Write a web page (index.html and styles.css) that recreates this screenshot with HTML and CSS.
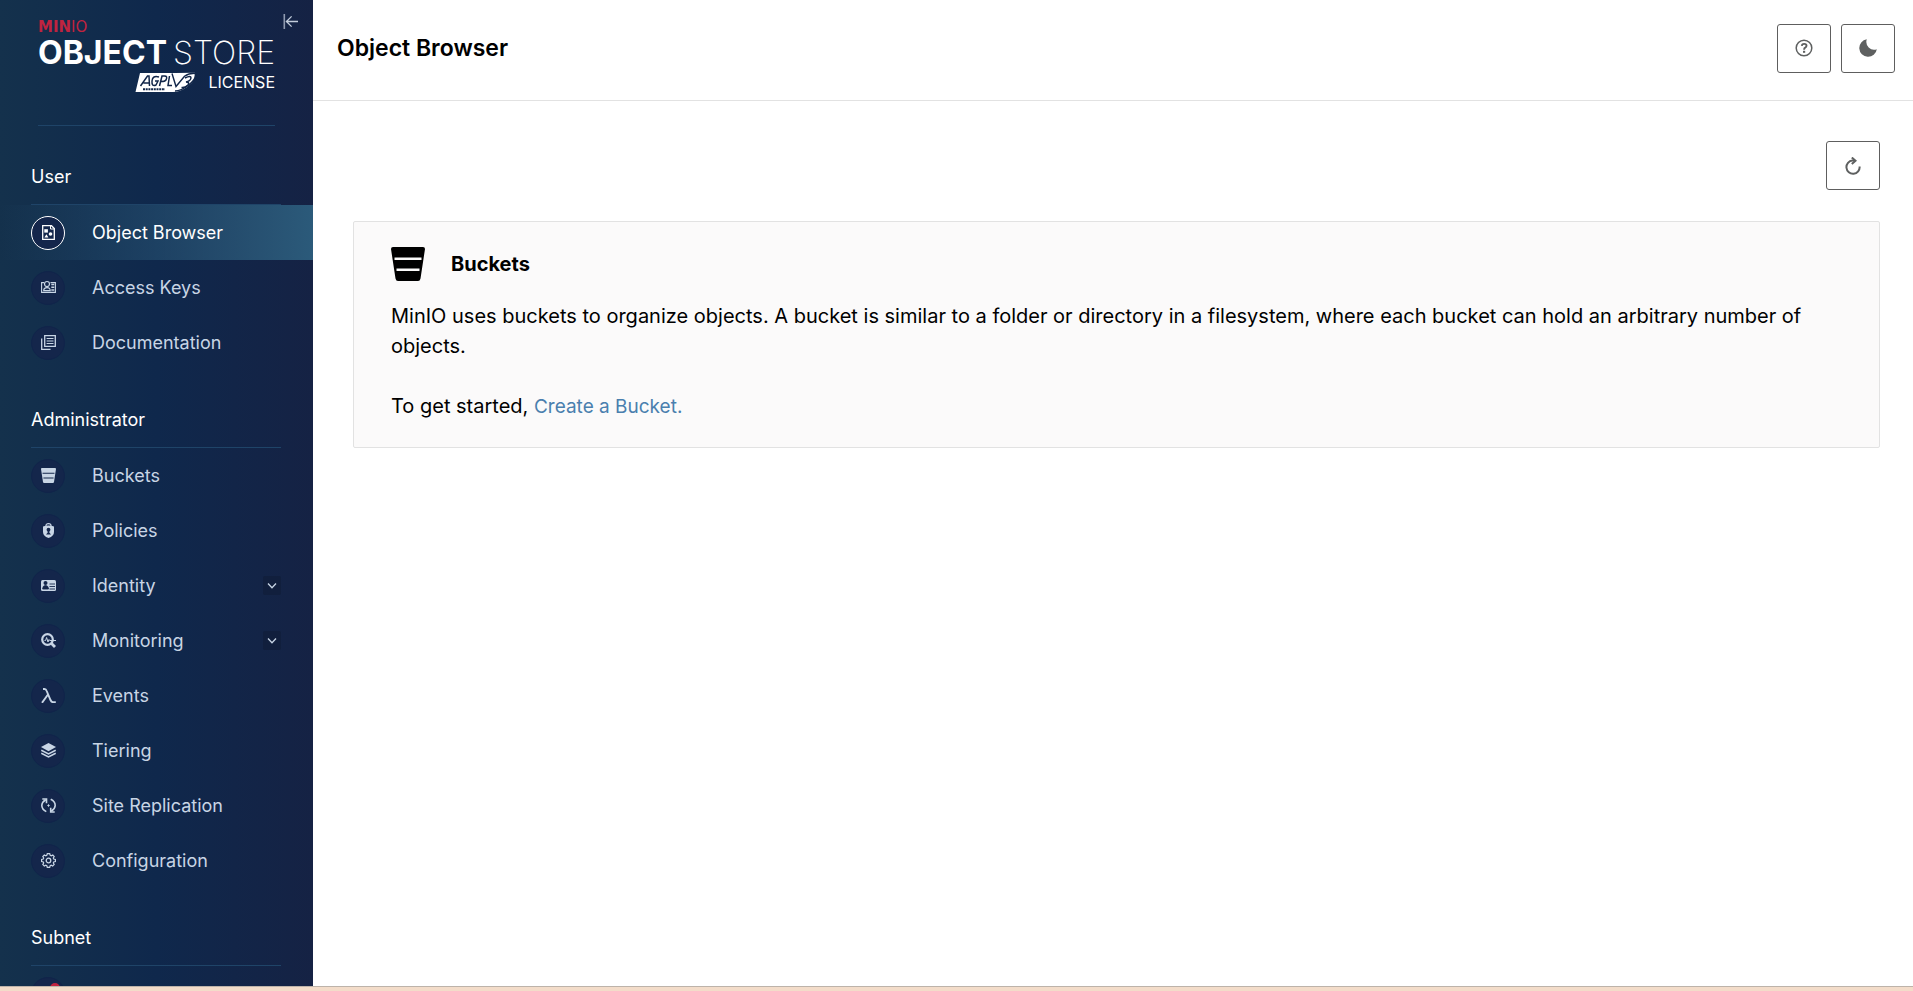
FILE: index.html
```html
<!DOCTYPE html>
<html lang="en">
<head>
<meta charset="utf-8">
<title>Object Browser</title>
<link rel="stylesheet" href="styles.css">
</head>
<body>
<div class="app">
  <aside class="sidebar">
    <div class="brand">
      <button class="collapse" type="button" aria-label="Collapse menu">
        <svg width="16" height="16" viewBox="0 0 16 16"><rect x="0.5" y="0" width="1.6" height="15" fill="#8f9ab0"/><path d="M15 7.5H3.6M8.6 2.4L3.4 7.5l5.2 5.1" fill="none" stroke="#c3cddc" stroke-width="1.3"/></svg>
      </button>
      <div class="brand-top"><b>MIN</b><span>IO</span></div>
      <div class="brand-name"><b>OBJECT</b> <span>STORE</span></div>
      <div class="brand-license">
        <svg class="agpl" width="62" height="21" viewBox="0 0 62 21">
          <path d="M5 1H40L60 .8Q62 8 52 15Q45 20 38 20H.5Z" fill="#fff"/>
          <path d="M37 1.5L41 14.5L49.5 4.2Q54 1 60 1.2Q62 7 53 13.500Q46 19 40 19" fill="none" stroke="#112649" stroke-width="1.4"/>
          <path d="M5.500 14L12.500 4H14L14.500 14M8.500 11H14M24 5Q17.500 3 17 9T21 13L23 9H20M24.500 14L27 4H29.500Q33 4 31 8Q30 9.500 26 9.500M34.500 4L33 13.500H37M50 6Q56 3 56 6Q55.500 9 51 10Q55 10 53 13Q50 16 46.500 15.500" fill="none" stroke="#112649" stroke-width="1.5"/>
          <path d="M8 17.300H30" stroke="#112649" stroke-width="2" stroke-dasharray="2 .7"/>
        </svg>
        <span>LICENSE</span>
      </div>
    </div>
    <nav class="menu">
      <h2 class="group">User</h2>
      <a class="item active" href="#browser"><span class="dot"><svg width="15" height="15" viewBox="0 0 15 15"><path d="M1.700.7H10.500L13.300 3.500V14.300H1.700Z" fill="none" stroke="currentColor" stroke-width="1.300"/><path d="M9.500.5V4H13.500" fill="none" stroke="currentColor"/><rect x="3.300" y="4.200" width="3.600" height="3.400" fill="currentColor"/><circle cx="9.500" cy="9" r="1.800" fill="currentColor"/><path d="M5.400 9.300L7.400 12.600H3.400Z" fill="currentColor"/></svg></span>Object Browser</a>
      <a class="item" href="#keys"><span class="dot"><svg width="15" height="15" viewBox="0 0 15 15"><path d="M3 2.600H.6V12.400H14.400V2.600H9.500" fill="none" stroke="currentColor" stroke-width="1.100"/><circle cx="6" cy="4" r="2.500" fill="none" stroke="currentColor" stroke-width="1.200"/><path d="M2.700 10.700Q2.700 7.600 6 7.600T9.200 10.700Z" fill="none" stroke="currentColor" stroke-width="1.200"/><path d="M10.300 4.500H13.300M10.300 7.200H13.300M10.300 10H13.300" stroke="currentColor" stroke-width="1.500"/></svg></span>Access Keys</a>
      <a class="item" href="#docs"><span class="dot"><svg width="15" height="15" viewBox="0 0 15 15"><path d="M3.700.7H14.300V11.300H3.700ZM.7 3.500V14.300H9.500" fill="none" stroke="currentColor" stroke-width="1.300"/><path d="M5.600 3.500H12.500M5.600 6H12.500M5.600 8.500H12.500" stroke="currentColor" stroke-width="1.200"/></svg></span>Documentation</a>

      <h2 class="group">Administrator</h2>
      <a class="item" href="#buckets"><span class="dot"><svg width="15" height="15" viewBox="0 0 34 34"><path d="M2 0H32Q34 0 34 2L29.500 31.500Q29 34 27 34H7Q5 34 4.500 31.500L0 2Q0 0 2 0ZM3.500 10.500V13H30.500V10.500ZM5.500 21.500V24H28.500V21.500Z" fill="currentColor" fill-rule="evenodd"/></svg></span>Buckets</a>
      <a class="item" href="#policies"><span class="dot"><svg width="15" height="15" viewBox="0 0 15 15"><path d="M5 3V2.600Q5 .6 7.500.6T10 2.600V3" fill="none" stroke="currentColor" stroke-width="1.200"/><path d="M2 3.500Q7.500 1.500 13 3.500V9Q13 13 7.500 15Q2 13 2 9Z" fill="currentColor"/><circle cx="7.500" cy="6.700" r="1.900" fill="#14264b"/><path d="M6.700 8H8.300V9.500L10 11.500H5L6.700 9.500Z" fill="#14264b"/></svg></span>Policies</a>
      <a class="item" href="#identity"><span class="dot"><svg width="15" height="15" viewBox="0 0 15 15"><rect y="2" width="15" height="11" rx="1.500" fill="currentColor"/><circle cx="4.500" cy="5" r="2" fill="#14264b"/><path d="M1.700 11Q1.700 7.500 4.500 7.500T7.500 11ZM8.500 6H14M8.500 8.500H14M8.500 11H14" fill="#14264b" stroke="#14264b" stroke-width=".9"/></svg></span>Identity<svg class="chev" width="18" height="19" viewBox="0 0 18 19"><path d="M5 7.500L9 11.800L13 7.500" fill="none" stroke="currentColor" stroke-width="1.300"/></svg></a>
      <a class="item" href="#monitoring"><span class="dot"><svg width="15" height="15" viewBox="0 0 15 15"><circle cx="6.500" cy="6.500" r="5.300" fill="none" stroke="currentColor" stroke-width="2.200"/><path d="M10.300 10.300L14 14" stroke="currentColor" stroke-width="2.800"/><path d="M3.500 7.500H4.600L5.600 4.500L7 9L8 6.500L8.700 7.500H15" fill="none" stroke="currentColor" stroke-width="1"/></svg></span>Monitoring<svg class="chev" width="18" height="19" viewBox="0 0 18 19"><path d="M5 7.500L9 11.800L13 7.500" fill="none" stroke="currentColor" stroke-width="1.300"/></svg></a>
      <a class="item" href="#events"><span class="dot"><svg width="15" height="15" viewBox="0 0 15 15"><path d="M2 1H3.500Q5 1 5.700 3L9.500 12Q10.500 14.200 12 14.200H14.800M7 6.500L1 14.800" fill="none" stroke="currentColor" stroke-width="1.900"/></svg></span>Events</a>
      <a class="item" href="#tiering"><span class="dot"><svg width="15" height="15" viewBox="0 0 15 15"><path d="M7.500 0L15 4.100L7.500 8.200L0 4.100Z" fill="currentColor"/><path d="M.3 7.200L7.500 11L14.700 7.200M.3 10.200L7.500 14L14.700 10.200" fill="none" stroke="currentColor" stroke-width="1.500"/></svg></span>Tiering</a>
      <a class="item" href="#replication"><span class="dot"><svg width="15" height="15" viewBox="0 0 15 15"><path d="M5.300 13.600Q.8 11.500.8 7.200Q1 4 4.700 1.700M9.700 1.300Q14.200 3.500 14.200 7.500Q14 11 10.300 13.300" fill="none" stroke="currentColor" stroke-width="1.600"/><path d="M1.300 1H5.500V5.300M13.700 14H9.700V9.800" fill="none" stroke="currentColor" stroke-width="1.600"/><path d="M7.500 5.800L8.100 6.900L9.200 7.500L8.100 8.100L7.500 9.200L6.900 8.100L5.800 7.500L6.900 6.900Z" fill="currentColor"/></svg></span>Site Replication</a>
      <a class="item" href="#config"><span class="dot"><svg width="15" height="15" viewBox="0 0 15 15"><path d="M6.300.7H8.700L9.200 2.300L10.300 2.800L11.800 2L13.200 3.500L12.300 5L12.700 6L14.400 6.400V8.600L12.700 9L12.300 10L13.200 11.500L11.700 13L10.200 12.200L9.200 12.700L8.700 14.300H6.300L5.800 12.700L4.800 12.200L3.300 13L1.800 11.500L2.700 10L2.300 9L.6 8.600V6.400L2.300 6L2.700 5L1.800 3.500L3.300 2L4.800 2.800L5.800 2.300Z" fill="none" stroke="currentColor" stroke-width="1.200"/><circle cx="7.500" cy="7.500" r="2.300" fill="none" stroke="currentColor" stroke-width="1.300"/></svg></span>Configuration</a>

      <h2 class="group">Subnet</h2>
      <a class="item" href="#license" aria-label="License"><span class="dot"><i class="badge"></i></span></a>
    </nav>
  </aside>

  <main class="main">
    <header class="topbar">
      <h1>Object Browser</h1>
      <div class="actions">
        <button class="btn" type="button" aria-label="Help"><svg width="18" height="18" viewBox="0 0 18 18"><circle cx="9" cy="9" r="7.800" fill="none" stroke="currentColor" stroke-width="1.500"/><path d="M6.800 6.900Q6.900 4.900 9.200 4.900T11.500 6.800Q11.500 8 10.200 8.600Q9.100 9.100 9.100 10.700" fill="none" stroke="currentColor" stroke-width="1.900"/><rect x="8" y="11.800" width="2.200" height="2" fill="currentColor"/></svg></button>
        <button class="btn" type="button" aria-label="Dark mode"><svg width="18" height="18" viewBox="0 0 18 18"><path d="M7.800.3A8.800 8.800 0 1 0 17.800 10.200A7.800 7.800 0 0 1 7.800.3Z" fill="currentColor"/></svg></button>
      </div>
    </header>
    <div class="content">
      <div class="tools">
        <button class="btn" type="button" aria-label="Refresh"><svg width="18" height="18" viewBox="0 0 18 18"><path d="M10.500 3.600H8.500A6.600 6.600 0 1 0 15.600 9.500" fill="none" stroke="currentColor" stroke-width="2"/><path d="M7.800.5L11.500 3.700L7.800 7" fill="none" stroke="currentColor" stroke-width="2"/></svg></button>
      </div>
      <section class="card">
        <h2 class="card-title"><svg width="34" height="34" viewBox="0 0 34 34"><path d="M2 0H32Q34 0 34 2L29.500 31.500Q29 34 27 34H7Q5 34 4.500 31.500L0 2Q0 0 2 0ZM3.500 10.500V13H30.500V10.500ZM5.500 21.500V24H28.500V21.500Z" fill="#000" fill-rule="evenodd"/></svg>Buckets</h2>
        <p>MinIO uses buckets to organize objects. A bucket is similar to a folder or directory in a filesystem, where each bucket can hold an arbitrary number of objects.</p>
        <p>To get started, <a class="link" href="#create">Create a Bucket.</a></p>
      </section>
    </div>
  </main>
</div>
<div class="strip"></div>
</body>
</html>
```
FILE: styles.css
```css
* { box-sizing: border-box; }
body {
  margin: 0;
  height: 100vh;
  display: flex;
  flex-direction: column;
  overflow: hidden;
  font-family: Inter, "Liberation Sans", sans-serif;
  color: #000;
  background: #fff;
}
.app { flex: 1; min-height: 0; display: flex; }
.strip { height: 5px; background: #f3dcc9; border-top: 1px solid #bdb3aa; }

.sidebar {
  width: 313px;
  flex-shrink: 0;
  overflow: hidden;
  background: linear-gradient(90deg, #14314c 0%, #0f284c 50%, #152244 100%);
}
.brand {
  position: relative;
  height: 126px;
  margin: 0 38px;
  padding-top: 19px;
  border-bottom: 1px solid #1f4468;
  color: #fff;
}
.collapse {
  position: absolute;
  top: 14px;
  right: -24px;
  padding: 0;
  border: 0;
  background: none;
  display: flex;
}
.brand-top {
  font: 400 15px/16px "DejaVu Sans", sans-serif;
  color: #c0233f;
}
.brand-top b { font-weight: 700; }
.brand-name {
  display: flex;
  justify-content: space-between;
  font-size: 32px;
  line-height: 36px;
  font-weight: 200;
  white-space: nowrap;
}
.brand-name b { font-weight: 700; }
.brand-license {
  display: flex;
  justify-content: flex-end;
  align-items: center;
  gap: 11px;
  font-size: 16px;
  line-height: 22px;
}

.menu { display: flex; flex-direction: column; padding-top: 1px; }
.group {
  margin: 0 32px 0 31px;
  padding: 39px 0 16px;
  border-bottom: 1px solid #1f4468;
  font-size: 18px;
  line-height: 22px;
  font-weight: 400;
  color: #fff;
}
.item {
  display: flex;
  align-items: center;
  height: 55px;
  padding: 0 32px 0 31px;
  font-size: 18px;
  color: #c8d5e5;
  text-decoration: none;
}
.item.active {
  color: #fff;
  background: linear-gradient(90deg, rgba(44, 93, 125, 0) 0%, #2b5a7a 100%);
}
.dot {
  position: relative;
  width: 34px;
  height: 34px;
  margin-right: 27px;
  border: 1px solid #10244a;
  border-radius: 50%;
  background: #14264b;
  display: flex;
  align-items: center;
  justify-content: center;
}
.active .dot { border-color: #fff; }
.badge {
  position: absolute;
  top: 5px;
  right: 4px;
  width: 10px;
  height: 10px;
  border-radius: 50%;
  background: #c0233f;
}
.chev { margin-left: auto; border-radius: 2px; background: #111f3d; }

.main { flex: 1; min-width: 0; }
.topbar {
  display: flex;
  align-items: center;
  justify-content: space-between;
  height: 101px;
  padding: 0 18px 4px 24px;
  border-bottom: 1px solid #e2e2e2;
}
.topbar h1 { margin: 0; font-size: 23px; line-height: 28px; font-weight: 600; }
.actions { display: flex; gap: 10px; }
.btn {
  width: 54px;
  height: 49px;
  padding: 0;
  border: 1px solid #5e5e5e;
  border-radius: 3px;
  background: #fff;
  color: #5e6060;
  display: flex;
  align-items: center;
  justify-content: center;
}
.content { padding: 40px 33px 0 40px; }
.tools { display: flex; justify-content: flex-end; margin-bottom: 31px; }
.card {
  padding: 25px 37px;
  border: 1px solid #e2e2e2;
  border-radius: 2px;
  background: #fbfafa;
}
.card-title {
  display: flex;
  align-items: center;
  gap: 26px;
  margin: 0 0 20px;
  font-size: 20px;
  line-height: 34px;
  font-weight: 700;
}
.card p { margin: 0 0 30px; font-size: 20px; line-height: 30px; }
.card p:last-child { margin-bottom: 0; }
.link { font-size: 19px; color: #4a7fae; text-decoration: none; }
```
